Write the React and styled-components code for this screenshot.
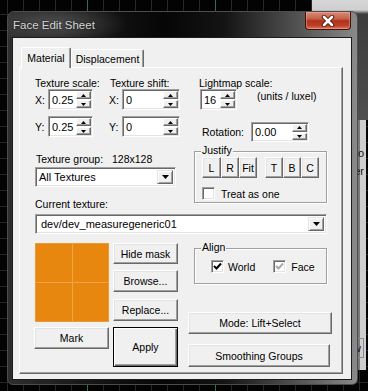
import React from 'react'
import styled, { createGlobalStyle } from 'styled-components'

const Up = () => (
    <svg width="5" height="3" viewBox="0 0 5 3"><polygon points="2.5,0 5,3 0,3" fill="#000" /></svg>
)

const Down = ({ w = 5, h = 3 }) => (
    <svg width={w} height={h} viewBox={`0 0 ${w} ${h}`}><polygon points={`0,0 ${w},0 ${w / 2},${h}`} fill="#000" /></svg>
)

function Spin({ w, h = 21, value }) {
    return (
        <SpinBox $w={w} $h={h}>
            <SpinText>{value}</SpinText>
            <Arrows>
                <ArrowBtn><Up /></ArrowBtn>
                <ArrowBtn><Down /></ArrowBtn>
            </Arrows>
        </SpinBox>
    )
}

function Combo({ w, text, pad = 4 }) {
    return (
        <ComboBox $w={w}>
            <ComboText $pad={pad}>{text}</ComboText>
            <DropBtn><Down w={7} h={4} /></DropBtn>
        </ComboBox>
    )
}

function Check({ checked, muted, label, gap = 4 }) {
    return (
        <CheckRow $gap={gap}>
            <CheckBox>
                {checked &&
                    <svg width="9" height="9" viewBox="0 0 9 9">
                        <polyline points="1,4 3.5,6.5 8,1.5" fill="none" stroke={muted ? '#a8a8a8' : '#000'} strokeWidth="2" />
                    </svg>
                }
            </CheckBox>
            <Label>{label}</Label>
        </CheckRow>
    )
}

export default function App() {
    return (
        <>
            <GlobalStyle />
            <Desktop>
                <BackGlow />
                <BackPanel>
                    <BackLine>Macro</BackLine>
                    <BackLine>Filter</BackLine>
                    <BackButton>View</BackButton>
                </BackPanel>

                <Window>
                    <TitleBar>
                        <Title>Face Edit Sheet</Title>
                        <CloseBtn>
                            <svg width="14" height="12" viewBox="0 0 14 12">
                                <path d="M3 2 L11 10 M11 2 L3 10" stroke="#4a1208" strokeWidth="4.4" strokeLinecap="round" />
                                <path d="M3 2 L11 10 M11 2 L3 10" stroke="#fff" strokeWidth="2.6" strokeLinecap="round" />
                            </svg>
                        </CloseBtn>
                    </TitleBar>

                    <Client>
                        <TabStrip>
                            <Tab $active $w={50}>Material</Tab>
                            <Tab $w={73}>Displacement</Tab>
                        </TabStrip>

                        <Panel>
                            <Upper>
                                <LeftCol>
                                    <ScaleShift>
                                        <FieldBlock $w={74}>
                                            <Label>Texture scale:</Label>
                                            <AxisRow>
                                                <Axis>X:</Axis>
                                                <Spin w={45} value="0.25" />
                                            </AxisRow>
                                            <AxisRow $top={6}>
                                                <Axis>Y:</Axis>
                                                <Spin w={45} value="0.25" />
                                            </AxisRow>
                                        </FieldBlock>
                                        <FieldBlock>
                                            <Label $indent={1}>Texture shift:</Label>
                                            <AxisRow>
                                                <Axis>X:</Axis>
                                                <Spin w={58} value="0" />
                                            </AxisRow>
                                            <AxisRow $top={6}>
                                                <Axis>Y:</Axis>
                                                <Spin w={58} value="0" />
                                            </AxisRow>
                                        </FieldBlock>
                                    </ScaleShift>

                                    <InfoLine>
                                        <Label $w={77} $indent={1}>Texture group:</Label>
                                        <Label>128x128</Label>
                                    </InfoLine>
                                    <Spaced $top={2}>
                                        <Combo w={141} text="All Textures" />
                                    </Spaced>
                                    <Spaced $top={7}>
                                        <Label>Current texture:</Label>
                                    </Spaced>
                                </LeftCol>

                                <RightCol>
                                    <Label $indent={5}>Lightmap scale:</Label>
                                    <LightRow>
                                        <Spin w={37} value="16" />
                                        <Units>(units / luxel)</Units>
                                    </LightRow>
                                    <RotRow>
                                        <Label $w={49}>Rotation:</Label>
                                        <Spin w={58} h={20} value="0.00" />
                                    </RotRow>
                                    <Group $h={52} $top={9}>
                                        <Legend>Justify</Legend>
                                        <JustifyRow>
                                            <BtnSet>
                                                <Btn $w={19} $h={21}>L</Btn>
                                                <Btn $w={18} $h={21}>R</Btn>
                                                <Btn $w={18} $h={21}>Fit</Btn>
                                            </BtnSet>
                                            <BtnSet>
                                                <Btn $w={18} $h={21}>T</Btn>
                                                <Btn $w={18} $h={21}>B</Btn>
                                                <Btn $w={18} $h={21}>C</Btn>
                                            </BtnSet>
                                        </JustifyRow>
                                        <TreatRow>
                                            <Check label="Treat as one" gap={6} />
                                        </TreatRow>
                                    </Group>
                                </RightCol>
                            </Upper>

                            <Spaced $top={2}>
                                <Combo w={292} text="dev/dev_measuregeneric01" pad={6} />
                            </Spaced>

                            <Lower>
                                <PreviewCol>
                                    <Preview />
                                    <Btn $w={75} $h={22} $top={5} $shift={-1}>Mark</Btn>
                                </PreviewCol>
                                <ButtonCol>
                                    <Btn $w={65} $h={21}>Hide mask</Btn>
                                    <Btn $w={65} $h={22} $top={6}>Browse...</Btn>
                                    <Btn $w={65} $h={22} $top={7}>Replace...</Btn>
                                    <Btn $w={65} $h={40} $top={6} $default>Apply</Btn>
                                </ButtonCol>
                                <ModeCol>
                                    <Group $h={36} $top={5} $side={6}>
                                        <Legend>Align</Legend>
                                        <AlignRow>
                                            <Check checked label="World" />
                                            <Check checked muted label="Face" gap={5} />
                                        </AlignRow>
                                    </Group>
                                    <Btn $w={144} $h={22} $top={28}>Mode: Lift+Select</Btn>
                                    <Btn $w={142} $h={23} $top={10}>Smoothing Groups</Btn>
                                </ModeCol>
                            </Lower>
                        </Panel>
                    </Client>
                </Window>
            </Desktop>
        </>
    )
}

let face = '#f0f0f0'
let light = '#e3e3e3'
let shadow = '#a0a0a0'
let dark = '#696969'
let grid = '#272727'
let green = '#2e7048'

const GlobalStyle = createGlobalStyle`
    html, body {
        margin: 0;
        padding: 0;
        background: #000;
    }
    body {
        font-family: "Liberation Sans", Arial, sans-serif;
    }
`

const Desktop = styled.div`
    position: relative;
    width: 368px;
    height: 391px;
    overflow: hidden;
    background-color: #030303;
    background-image:
        linear-gradient(to right, transparent 87px, ${green} 87px, ${green} 88px, transparent 88px, transparent 215px, ${green} 215px, ${green} 216px, transparent 216px),
        linear-gradient(to right, ${grid} 1px, transparent 1px),
        linear-gradient(to bottom, ${grid} 1px, transparent 1px);
    background-size: 100% 100%, 16px 16px, 16px 16px;
    background-position: 0 0, 7px 0, 0 14px;
`

const BackGlow = styled.div`
    position: absolute;
    left: 312px;
    top: 0;
    width: 56px;
    height: 120px;
    background: linear-gradient(to bottom, #d6d6d6 0, #cfcfcf 10px, #3c3c3c 14px, #4e4e4e 120px);
`

const BackPanel = styled.div`
    position: absolute;
    left: 300px;
    top: 120px;
    width: 66px;
    height: 250px;
    box-sizing: border-box;
    padding: 24px 2px 0 0;
    background: #cfcfcf;
    border-left: 60px solid #7a7a7a;
    display: flex;
    flex-direction: column;
    align-items: flex-end;
    font-size: 11px;
    color: #111;
`

const BackLine = styled.div`
    line-height: 18px;
`

const BackButton = styled.div`
    margin-top: auto;
    margin-bottom: 12px;
    line-height: 16px;
    padding: 1px 2px;
    border: 1px solid #8a8a8a;
`

const Window = styled.div`
    position: absolute;
    left: 7px;
    top: 11px;
    width: 351px;
    height: 374px;
    box-sizing: border-box;
    display: flex;
    flex-direction: column;
    border: 1px solid #4c4c4c;
    border-radius: 7px 7px 6px 6px;
    background:
        radial-gradient(ellipse 70px 22px at 50px 12px, rgba(120, 120, 120, 0.55), rgba(120, 120, 120, 0) 100%),
        linear-gradient(to right, #2e2e2e 0%, #151515 25%, #060606 45%, #141414 62%, #585858 85%, #8a8a8a 100%);
`

const TitleBar = styled.div`
    height: 25px;
    display: flex;
    padding: 0 6px 0 5px;
`

const Title = styled.span`
    align-self: center;
    font-size: 11.5px;
    color: #d4d4d4;
    text-shadow: 0 0 3px rgba(0, 0, 0, 0.8);
    margin-top: 1px;
`

const CloseBtn = styled.div`
    margin-left: auto;
    width: 46px;
    height: 18px;
    box-sizing: border-box;
    border: 1px solid #3b140c;
    border-top: none;
    border-radius: 0 0 4px 4px;
    background: linear-gradient(to bottom, #d88a78 0%, #c8604a 40%, #b0321e 52%, #bd4026 80%, #de7a5e 100%);
    box-shadow: inset 0 0 0 1px rgba(255, 200, 190, 0.35);
    display: flex;
    align-items: center;
    justify-content: center;
`

const Client = styled.div`
    flex: 1;
    margin: 0 5px 4px 4px;
    box-sizing: border-box;
    border: 1px solid #1c1c1c;
    background: ${face};
    padding: 9px 8px 5px 6px;
    display: flex;
    flex-direction: column;
`

const TabStrip = styled.div`
    height: 20px;
    display: flex;
    align-items: flex-end;
    padding-left: 2px;
    position: relative;
    z-index: 1;
`

const Tab = styled.div`
    box-sizing: border-box;
    width: ${p => p.$w}px;
    height: ${p => p.$active ? 21 : 18}px;
    margin-bottom: ${p => p.$active ? -1 : 0}px;
    padding-top: ${p => p.$active ? 4 : 3}px;
    background: ${face};
    border: 1px solid;
    border-color: #fff ${dark} transparent #fff;
    border-bottom: none;
    border-radius: 2px 2px 0 0;
    box-shadow: inset -1px 0 ${shadow};
    font-size: 10.5px;
    line-height: 12px;
    text-align: center;
    color: #000;
`

const Panel = styled.div`
    flex: 1;
    box-sizing: border-box;
    border: 1px solid;
    border-color: #fff ${dark} ${dark} #fff;
    box-shadow: inset -1px -1px ${shadow};
    padding: 9px 0 0 15px;
    display: flex;
    flex-direction: column;
`

const Label = styled.span`
    display: inline-block;
    font-size: 10.5px;
    line-height: 12px;
    color: #000;
    white-space: nowrap;
    width: ${p => p.$w ? `${p.$w}px` : 'auto'};
    padding-left: ${p => p.$indent || 0}px;
    box-sizing: border-box;
`

const Upper = styled.div`
    display: grid;
    grid-template-columns: 159px 133px;
    align-items: start;
`

const LeftCol = styled.div`
    display: flex;
    flex-direction: column;
    align-items: flex-start;
`

const RightCol = styled.div`
    display: flex;
    flex-direction: column;
    align-items: flex-start;
`

const ScaleShift = styled.div`
    display: flex;
`

const FieldBlock = styled.div`
    width: ${p => p.$w ? `${p.$w}px` : 'auto'};
    display: flex;
    flex-direction: column;
`

const AxisRow = styled.div`
    display: flex;
    align-items: center;
    margin-top: ${p => p.$top || 0}px;
`

const Axis = styled.span`
    width: 13px;
    font-size: 10.5px;
    line-height: 12px;
    color: #000;
`

const SpinBox = styled.div`
    box-sizing: border-box;
    width: ${p => p.$w}px;
    height: ${p => p.$h}px;
    display: flex;
    background: #fff;
    border: 1px solid;
    border-color: ${shadow} #fff #fff ${shadow};
    box-shadow: inset 1px 1px ${dark}, inset -1px -1px ${light};
    padding: 1px 1px 1px 1px;
`

const SpinText = styled.span`
    flex: 1;
    align-self: center;
    padding-left: 2px;
    font-size: 11px;
    line-height: 12px;
    color: #000;
`

const Arrows = styled.div`
    width: 15px;
    display: flex;
    flex-direction: column;
    gap: 1px;
`

const ArrowBtn = styled.div`
    flex: 1;
    box-sizing: border-box;
    background: ${face};
    border: 1px solid;
    border-color: #fff ${dark} ${dark} #fff;
    box-shadow: inset -1px -1px ${shadow};
    display: flex;
    align-items: center;
    justify-content: center;
    line-height: 0;
`

const InfoLine = styled.div`
    display: flex;
    margin-top: 16px;
`

const Spaced = styled.div`
    margin-top: ${p => p.$top || 0}px;
`

const ComboBox = styled.div`
    box-sizing: border-box;
    width: ${p => p.$w}px;
    height: 20px;
    display: flex;
    background: #fff;
    border: 1px solid;
    border-color: ${shadow} #fff #fff ${shadow};
    box-shadow: inset 1px 1px ${dark}, inset -1px -1px ${light};
    padding: 2px 2px 2px 2px;
`

const ComboText = styled.span`
    flex: 1;
    align-self: center;
    padding-left: ${p => p.$pad - 3}px;
    font-size: 11px;
    line-height: 12px;
    color: #000;
    white-space: nowrap;
`

const DropBtn = styled.div`
    width: 16px;
    box-sizing: border-box;
    background: ${face};
    border: 1px solid;
    border-color: ${light} ${dark} ${dark} ${light};
    box-shadow: inset 1px 1px #fff, inset -1px -1px ${shadow};
    display: flex;
    align-items: center;
    justify-content: center;
    line-height: 0;
`

const LightRow = styled.div`
    display: flex;
    align-items: flex-start;
    padding-left: 6px;
`

const Units = styled.span`
    margin: 1px 0 0 20px;
    font-size: 10.5px;
    line-height: 12px;
    color: #000;
    white-space: nowrap;
`

const RotRow = styled.div`
    display: flex;
    align-items: center;
    padding-left: 8px;
    margin-top: 12px;
`

const Group = styled.div`
    position: relative;
    box-sizing: border-box;
    width: 133px;
    height: ${p => p.$h}px;
    margin-top: ${p => p.$top || 0}px;
    margin-left: ${p => p.$side || 0}px;
    border: 1px solid ${shadow};
    box-shadow: 1px 1px 0 #fff, inset 1px 1px 0 #fff;
`

const Legend = styled.span`
    position: absolute;
    top: -8px;
    left: 6px;
    padding: 0 1px;
    background: ${face};
    font-size: 10.5px;
    line-height: 12px;
    color: #000;
`

const JustifyRow = styled.div`
    display: flex;
    gap: 8px;
    padding: 5px 0 0 7px;
`

const BtnSet = styled.div`
    display: flex;
`

const TreatRow = styled.div`
    padding: 9px 0 0 7px;
`

const AlignRow = styled.div`
    display: flex;
    gap: 18px;
    padding: 11px 0 0 16px;
`

const CheckRow = styled.div`
    display: flex;
    align-items: center;
    gap: ${p => p.$gap}px;
`

const CheckBox = styled.span`
    width: 13px;
    height: 13px;
    box-sizing: border-box;
    background: #fff;
    border: 1px solid;
    border-color: ${shadow} #fff #fff ${shadow};
    box-shadow: inset 1px 1px ${dark}, inset -1px -1px ${light};
    display: flex;
    align-items: center;
    justify-content: center;
    line-height: 0;
`

const Btn = styled.button`
    box-sizing: border-box;
    width: ${p => p.$w}px;
    height: ${p => p.$h}px;
    margin: ${p => p.$top || 0}px 0 0 ${p => p.$shift || 0}px;
    padding: 0;
    background: ${face};
    font-family: "Liberation Sans", Arial, sans-serif;
    font-size: 10.5px;
    line-height: 12px;
    color: #000;
    border: 1px solid;
    border-color: ${p => p.$default ? '#000' : `#fff ${dark} ${dark} #fff`};
    box-shadow: ${p => p.$default
        ? `inset 1px 1px #fff, inset -1px -1px ${dark}, inset -2px -2px ${shadow}`
        : `inset -1px -1px ${shadow}, inset 1px 1px ${light}`};
`

const Lower = styled.div`
    display: grid;
    grid-template-columns: 74px 65px 144px;
    column-gap: 4px;
    margin-top: 9px;
    align-items: start;
`

const PreviewCol = styled.div`
    display: flex;
    flex-direction: column;
`

const Preview = styled.div`
    width: 74px;
    height: 79px;
    box-sizing: border-box;
    border: 1px solid #ec9a3a;
    background-color: #e8870f;
    background-image:
        linear-gradient(to right, transparent 36px, #f0a446 36px, #f0a446 37px, transparent 37px),
        linear-gradient(to bottom, transparent 38px, #f0a446 38px, #f0a446 39px, transparent 39px);
`

const ButtonCol = styled.div`
    display: flex;
    flex-direction: column;
`

const ModeCol = styled.div`
    margin-left: 6px;
    display: flex;
    flex-direction: column;
    align-items: flex-start;
`
